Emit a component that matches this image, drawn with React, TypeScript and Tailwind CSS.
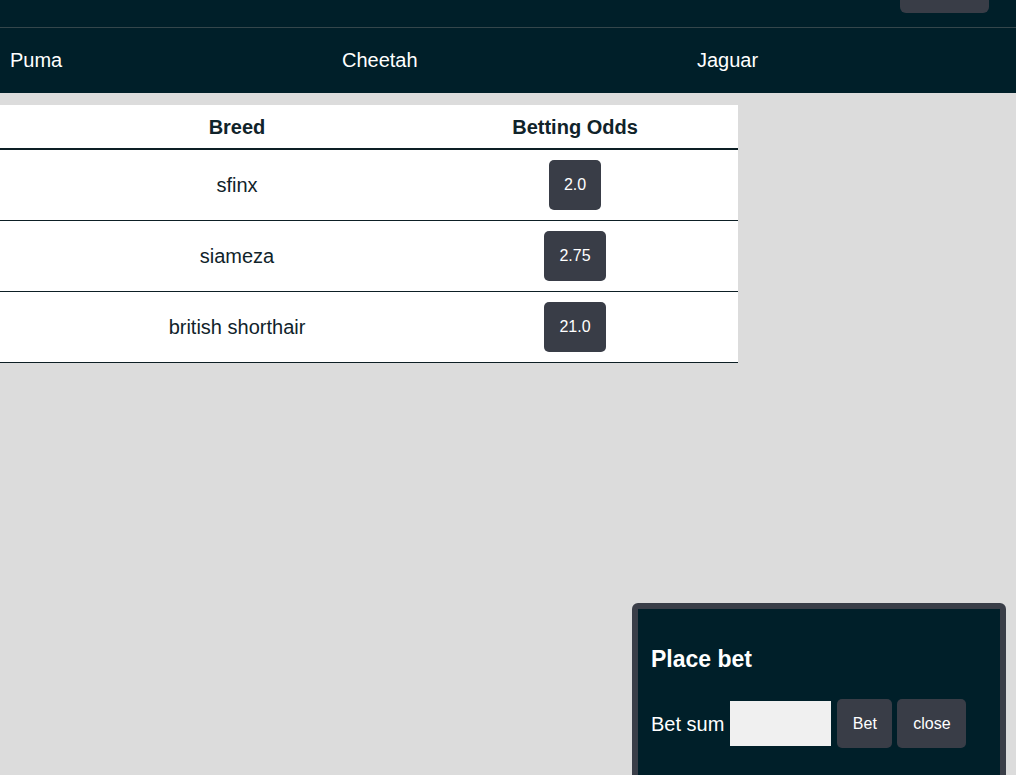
import React, { useState } from "react";

const breeds = [
  { name: "sfinx", odds: "2.0" },
  { name: "siameza", odds: "2.75" },
  { name: "british shorthair", odds: "21.0" },
];

const App = () => {
  const [sum, setSum] = useState("");

  return (
    <div
      className="min-h-screen bg-[#dcdcdc] text-[#10232a]"
      style={{ fontFamily: '"Liberation Sans", Arial, sans-serif' }}
    >
      {/* top bar */}
      <div className="h-[27px] bg-[#001f29] border-b border-[#34464b] box-content flex justify-end pr-[27px]">
        <button className="w-[89px] h-[40px] -mt-[27px] rounded-[6px] bg-[#393d47]"></button>
      </div>

      {/* nav */}
      <nav className="h-[65px] pb-[2px] bg-[#001f29] flex items-center text-white text-[20px]">
        <a className="ml-[10px] w-[332px]">Puma</a>
        <a className="w-[355px]">Cheetah</a>
        <a>Jaguar</a>
      </nav>

      {/* table */}
      <div className="mt-[12px] w-[738px] bg-white text-[20px]">
        <div className="grid grid-cols-[474px_202px_1fr] h-[45px] items-center font-bold border-b-2 border-[#0d1f25]">
          <div className="text-center">Breed</div>
          <div className="text-center">Betting Odds</div>
          <div></div>
        </div>
        {breeds.map((b) => (
          <div
            key={b.name}
            className="grid grid-cols-[474px_202px_1fr] h-[71px] items-center border-b border-[#0d1f25]"
          >
            <div className="text-center">{b.name}</div>
            <div className="flex justify-center">
              <button className="h-[50px] px-[15px] rounded-[5px] bg-[#393d47] text-white text-[16px]">
                {b.odds}
              </button>
            </div>
            <div></div>
          </div>
        ))}
      </div>

      {/* bet modal */}
      <div className="fixed left-[632px] top-[603px] w-[374px] h-[200px] rounded-[6px] border-[6px] border-[#3a3e48] bg-[#001f29] text-white px-[13px]">
        <h2 className="mt-[36px] text-[23px] font-bold leading-[28px]">Place bet</h2>
        <div className="mt-[26px] flex items-center text-[20px]">
          <span>Bet sum</span>
          <input
            value={sum}
            onChange={(e) => setSum(e.target.value)}
            className="ml-[6px] w-[101px] h-[45px] bg-[#f0f0f0] text-black px-2 outline-none"
          />
          <button className="ml-[6px] w-[55px] h-[49px] rounded-[5px] bg-[#393d47] text-[16px]">
            Bet
          </button>
          <button className="ml-[5px] w-[69px] h-[49px] rounded-[5px] bg-[#393d47] text-[16px]">
            close
          </button>
        </div>
      </div>
    </div>
  );
};

export default App;
